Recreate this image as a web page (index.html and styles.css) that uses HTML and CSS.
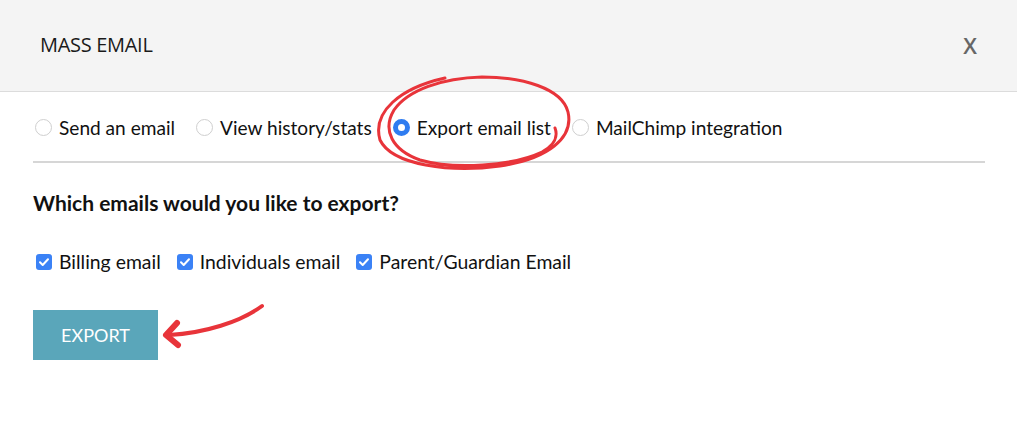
FILE: index.html
```html
<!DOCTYPE html>
<html>
<head>
<meta charset="utf-8">
<link rel="stylesheet" href="styles.css">
</head>
<body>
<div class="modal">
  <div class="header">
    <div class="title">MASS EMAIL</div>
    <div class="close">X</div>
  </div>
  <div class="content">
    <div class="tabs">
      <label class="opt tab"><span class="radio"></span>Send an email</label>
      <label class="opt tab"><span class="radio"></span>View history/stats</label>
      <label class="opt tab"><span class="radio on"></span>Export email list</label>
      <label class="opt tab"><span class="radio"></span>MailChimp integration</label>
    </div>
    <div class="question">Which emails would you like to export?</div>
    <div class="checks">
      <label class="opt"><span class="check"><svg viewBox="0 0 16 16" width="16" height="16"><path d="M4 8.3l2.7 2.7L12 5.3" fill="none" stroke="#fff" stroke-width="2" stroke-linecap="round" stroke-linejoin="round"/></svg></span>Billing email</label>
      <label class="opt"><span class="check"><svg viewBox="0 0 16 16" width="16" height="16"><path d="M4 8.3l2.7 2.7L12 5.3" fill="none" stroke="#fff" stroke-width="2" stroke-linecap="round" stroke-linejoin="round"/></svg></span>Individuals email</label>
      <label class="opt"><span class="check"><svg viewBox="0 0 16 16" width="16" height="16"><path d="M4 8.3l2.7 2.7L12 5.3" fill="none" stroke="#fff" stroke-width="2" stroke-linecap="round" stroke-linejoin="round"/></svg></span>Parent/Guardian Email</label>
    </div>
    <button class="btn">EXPORT</button>
  </div>
  <svg class="annot" width="1017" height="431" viewBox="0 0 1017 431">
    <path d="M445 78 C 400 88, 372 112, 380 140 C 392 165, 450 173, 500 166 C 548 159, 574 138, 568 112 C 562 88, 522 77, 482 77 C 442 78, 408 90, 394 110 C 382 130, 392 150, 420 160 C 455 170, 512 166, 542 152 C 555 145, 558 136, 555 128" fill="none" stroke="#e8343a" stroke-width="3" stroke-linecap="round"/>
    <path d="M262 306 C 240 322, 205 333, 169 335" fill="none" stroke="#e8343a" stroke-width="4" stroke-linecap="round"/>
    <path d="M177 323 L 166 335 L 178 345" fill="none" stroke="#e8343a" stroke-width="6" stroke-linecap="round" stroke-linejoin="round"/>
  </svg>
</div>
</body>
</html>
```

FILE: styles.css
```css
* { box-sizing: border-box; }
body {
  margin: 0;
  background: #fff;
  font-family: Lato, "Open Sans", sans-serif;
  color: #1a1a1a;
}
.modal {
  position: relative;
  width: 1017px;
  height: 431px;
}
.header {
  height: 92px;
  background: #f4f4f4;
  border-bottom: 1px solid #dcdcdc;
  display: flex;
  align-items: center;
  justify-content: space-between;
  padding: 0 40px 2px 40px;
}
.title {
  font-family: "Open Sans", sans-serif;
  font-size: 20px;
  letter-spacing: -0.3px;
  color: #1a1a1a;
}
.close {
  font-family: "Open Sans", sans-serif;
  font-size: 22px;
  font-weight: 600;
  color: #666;
}
.content {
  padding: 0 32px 0 33px;
}
.tabs {
  display: flex;
  align-items: center;
  gap: 21px;
  height: 71px;
  border-bottom: 2px solid #d6d6d6;
  padding-left: 2px;
  padding-top: 1px;
}
.opt {
  display: flex;
  align-items: center;
  font-size: 19.4px;
  color: #111;
}
.opt.tab {
  font-size: 19.1px;
}
.radio {
  flex-shrink: 0;
  width: 17px;
  height: 17px;
  border-radius: 50%;
  border: 1px solid #cfcfcf;
  background: #fff;
  margin-right: 7px;
}
.radio.on {
  border: 5px solid #2f7cf0;
}
.question {
  font-weight: bold;
  font-size: 21px;
  margin-top: 27px;
  height: 25px;
  color: #111;
}
.checks {
  display: flex;
  align-items: center;
  gap: 16px;
  margin-top: 35px;
  padding-left: 3px;
}
.check {
  flex-shrink: 0;
  width: 16px;
  height: 16px;
  border-radius: 3px;
  background: #3b82f6;
  margin-right: 7px;
  display: flex;
}
.btn {
  display: block;
  margin-top: 37px;
  width: 125px;
  height: 50px;
  border: none;
  background: #5aa6ba;
  color: #fff;
  font-family: Lato, sans-serif;
  font-size: 18px;
  padding: 0;
}
.annot {
  position: absolute;
  left: 0;
  top: 0;
  pointer-events: none;
}
```
